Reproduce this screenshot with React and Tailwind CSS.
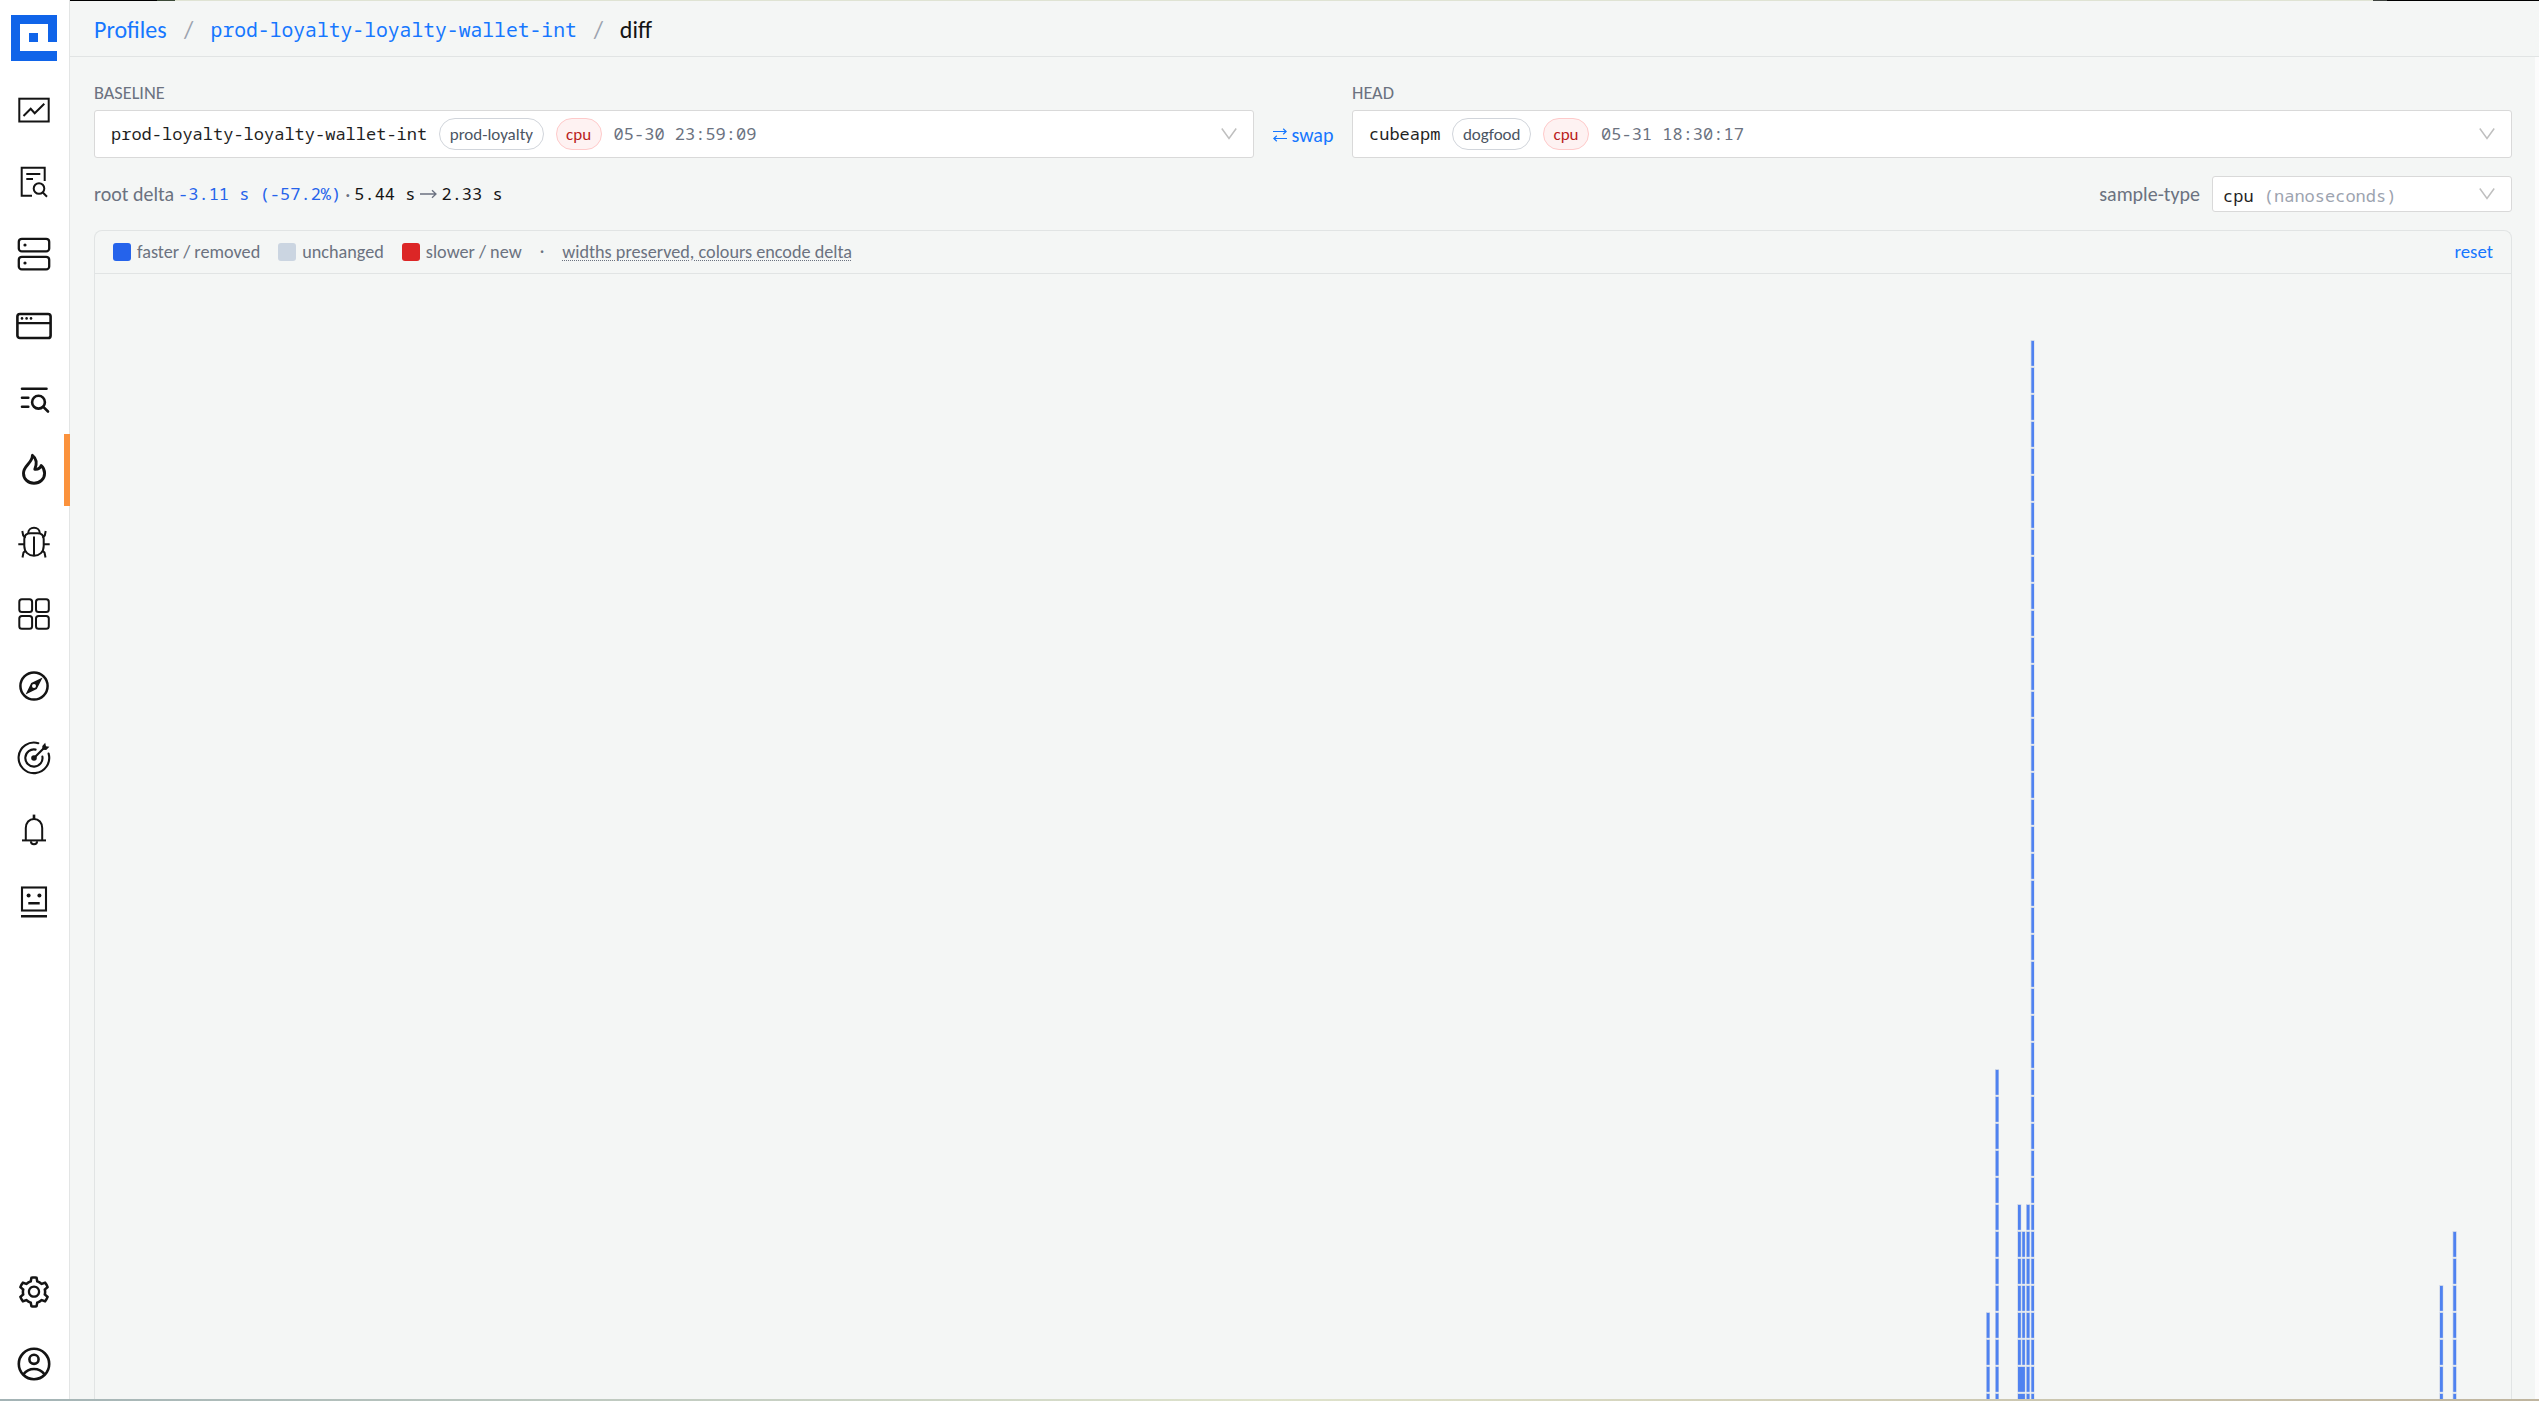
import { AiOutlineSetting } from 'react-icons/ai';

const SANS = "font-['Carlito','Calibri','Lato',sans-serif]";
const MONO = "font-['Noto_Sans_Mono','DejaVu_Sans_Mono',monospace] font-[370]";

const NAV = [
  {
    id: 'dashboards',
    art: (
      <g strokeWidth="2">
        <rect x="3.3" y="6.7" width="29.4" height="22.8" />
        <path d="M7.5 24L14.7 16.8L18.7 21.2L28.3 11.8" />
      </g>
    ),
  },
  {
    id: 'logs',
    art: (
      <g strokeWidth="2">
        <path d="M28.7 17V3.7H5.7V31.7H16M10.3 10H24.3M10.3 15H17" />
        <circle cx="23" cy="24.5" r="5.3" />
        <path d="M26.8 28.5L31 32.7" />
      </g>
    ),
  },
  {
    id: 'hosts',
    art: (
      <g strokeWidth="2.3">
        <rect x="2.8" y="2.8" width="30.4" height="12.6" rx="3" />
        <rect x="2.8" y="20.8" width="30.4" height="12.6" rx="3" />
        <circle cx="9" cy="9" r="1.6" fill="currentColor" stroke="none" />
        <circle cx="9" cy="27" r="1.6" fill="currentColor" stroke="none" />
      </g>
    ),
  },
  {
    id: 'browser',
    art: (
      <g strokeWidth="2.6">
        <rect x="1.4" y="6" width="33.2" height="24" rx="2.6" />
        <path d="M1.4 15.2H34.6" strokeWidth="2.2" />
        <g fill="currentColor" stroke="none">
          <circle cx="6" cy="10.4" r="1.3" />
          <circle cx="10.6" cy="10.4" r="1.3" />
          <circle cx="15" cy="10.4" r="1.3" />
        </g>
      </g>
    ),
  },
  {
    id: 'traces',
    art: (
      <g strokeWidth="2.6" strokeLinecap="round">
        <path d="M6 8.7H30.5M6 17.8H12.3M6 26.7H12.3" />
        <circle cx="22.5" cy="22.2" r="6.4" />
        <path d="M27.3 26.9L32 31.5" />
      </g>
    ),
  },
  {
    id: 'profiles',
    active: true,
    art: (
      <path
        strokeWidth="2.9"
        strokeLinejoin="round"
        d="M16.4 3.4C16.6 11 7.5 13.5 7.5 21.3C7.5 27 12 31.2 18 31.2C24 31.2 28.6 27 28.6 21.3C28.6 18 27.5 15.5 25.2 13.5C24.4 16 22.3 17.5 18.8 17.3C21 12 21 7 16.4 3.4Z"
      />
    ),
  },
  {
    id: 'errors',
    art: (
      <g strokeWidth="2">
        <path d="M12.3 9.4V8.8C12.3 5.8 14.7 3.7 18 3.7C21.3 3.7 23.7 5.8 23.7 8.8V9.4" />
        <path d="M14.5 9.2H21.5C25.5 9.2 27.7 11.4 27.7 15V22C27.7 28 23.5 31.7 18 31.7C12.5 31.7 8.3 28 8.3 22V15C8.3 11.4 10.5 9.2 14.5 9.2Z" />
        <path d="M18 12.5V32M2.3 20.3H8.3M27.7 20.3H33.7" />
        <path d="M6.3 7L7.2 11.5L9.5 13.8M29.7 7L28.8 11.5L26.5 13.8M6.5 33.5L7.5 28.6L9.7 26.6M29.5 33.5L28.5 28.6L26.3 26.6" />
      </g>
    ),
  },
  {
    id: 'services',
    art: (
      <g strokeWidth="2">
        <rect x="3.3" y="3.3" width="12.8" height="12.8" rx="2.6" />
        <rect x="20" y="3.3" width="12.8" height="12.8" rx="2.6" />
        <rect x="3.3" y="20" width="12.8" height="12.8" rx="2.6" />
        <rect x="20" y="20" width="12.8" height="12.8" rx="2.6" />
      </g>
    ),
  },
  {
    id: 'explore',
    art: (
      <g strokeWidth="2.5">
        <circle cx="18" cy="18" r="13.6" />
        <path
          fill="currentColor"
          stroke="none"
          fillRule="evenodd"
          d="M26.6 9.4L20.8 21L9.6 26.6L15.2 15ZM18 16A2 2 0 1 0 18 20A2 2 0 1 0 18 16Z"
        />
      </g>
    ),
  },
  {
    id: 'slo',
    art: (
      <g strokeWidth="2.1" strokeLinecap="round">
        <path d="M22.3 3.2A15.3 15.3 0 1 0 32.6 13.6" />
        <path d="M19.6 9.6A8.6 8.6 0 1 0 26.4 16.6" />
        <path d="M18 18L28 8" />
        <circle cx="18" cy="18" r="2.8" fill="currentColor" stroke="none" />
        <path d="M26.3 9.7L26.3 6L29.2 2.8L30 6.2L33.4 6.8L30.2 9.9Z" fill="currentColor" stroke="none" />
      </g>
    ),
  },
  {
    id: 'alerts',
    art: (
      <g strokeWidth="2">
        <path d="M9.8 28V16C9.8 10.8 13.2 6.9 18 6.9C22.8 6.9 26.2 10.8 26.2 16V28" />
        <path d="M6 28.4H30" />
        <path d="M18 2.6V7" strokeWidth="2.6" />
        <path d="M14.9 29.2A3.1 3.1 0 0 0 21.1 29.2" />
      </g>
    ),
  },
  {
    id: 'synthetics',
    art: (
      <g strokeWidth="2.1">
        <rect x="6" y="3.5" width="24" height="23" />
        <path d="M12.3 19.3H23.7M5 32.3H31" strokeWidth="2.4" />
        <circle cx="12.6" cy="11.6" r="2" fill="currentColor" stroke="none" />
        <circle cx="23.4" cy="11.6" r="2" fill="currentColor" stroke="none" />
      </g>
    ),
  },
];

// flame columns: x, width, top; every frame is 27px high including its gap
const FRAME = 27;
const COLUMNS = [
  { x: 1986, w: 4, top: 1312 },
  { x: 1995, w: 4, top: 1069 },
  { x: 2017.3, w: 4, top: 1204, end: 1366 },
  { x: 2021.6, w: 3.8, top: 1231, end: 1366 },
  { x: 2017.3, w: 8.1, top: 1366 },
  { x: 2026, w: 4, top: 1204 },
  { x: 2030.7, w: 3.8, top: 340 },
  { x: 2439.3, w: 4, top: 1285 },
  { x: 2452.6, w: 4, top: 1231 },
];

function NavItem({ active, children }) {
  return (
    <a className="relative flex h-[72px] w-full shrink-0 items-center pl-4 text-[#141414]">
      {children}
      {active && <span className="absolute -right-px top-0 h-full w-1.5 bg-[#fb923c]" />}
    </a>
  );
}

function Glyph({ children }) {
  return (
    <svg width="36" height="36" viewBox="0 0 36 36" fill="none" stroke="currentColor">
      {children}
    </svg>
  );
}

function Sidebar() {
  return (
    <nav className="flex w-[70px] shrink-0 flex-col border-r border-[#e3e5e5] bg-white">
      <div className="h-[74px] shrink-0 pl-[11px] pt-[15px]">
        <svg width="46" height="46" viewBox="0 0 46 46" fill="#1064e9">
          <path d="M0 0H46V27H37V9H9V36H46V46H0Z" />
          <rect x="18" y="18" width="9" height="9" />
        </svg>
      </div>
      {NAV.map((item) => (
        <NavItem key={item.id} active={item.active}>
          <Glyph>{item.art}</Glyph>
        </NavItem>
      ))}
      <div className="-mb-px mt-auto">
        <NavItem>
          <AiOutlineSetting size={36} />
        </NavItem>
        <NavItem>
          <Glyph>
            <g strokeWidth="2.6">
              <circle cx="18" cy="18" r="15.2" />
              <circle cx="18" cy="13.3" r="4.6" />
              <path d="M7.5 28.3C10 24.9 13.6 23 18 23C22.4 23 26 24.9 28.5 28.3" />
            </g>
          </Glyph>
        </NavItem>
      </div>
    </nav>
  );
}

function Chevron() {
  return (
    <svg width="16" height="12" viewBox="0 0 16 12" fill="none" stroke="#bfbfbf" strokeWidth="1.5">
      <path d="M0.8 0.5L8 10.5L15.2 0.5" />
    </svg>
  );
}

function ProfileSelect({ label, name, env, type, time }) {
  return (
    <div className="flex w-[1160px] flex-col">
      <span className="h-[25px] text-[18.3px] leading-[16px] text-[#6b7280]">{label}</span>
      <div className="flex h-12 items-center rounded-[3px] border border-[#d9d9d9] bg-white pl-4 pr-4">
        <span className={`${MONO} text-[17px] text-[#1f1f1f]`}>{name}</span>
        <span className="ml-3 flex h-8 items-center rounded-full border border-[#d1d5db] px-[9.5px] pt-px text-[17px] text-[#4b5563]">
          {env}
        </span>
        <span className="ml-3 flex h-8 items-center rounded-full border border-[#fecaca] bg-[#fef2f2] px-[9.5px] pt-px text-[17px] text-[#b91c1c]">
          {type}
        </span>
        <span className={`${MONO} ml-3 text-[17px] text-[#6b7280]`}>{time}</span>
        <span className="ml-auto">
          <Chevron />
        </span>
      </div>
    </div>
  );
}

function Swatch({ color, children }) {
  return (
    <span className="flex items-center gap-1.5">
      <span className={`size-[18px] rounded-[3px] ${color}`} />
      <span className="pt-px">{children}</span>
    </span>
  );
}

function FlameChart() {
  return (
    <svg className="block" width="2416" height="1125" viewBox="95 274 2416 1125">
      {COLUMNS.map((col, i) => {
        const end = col.end ?? 1399;
        const count = Math.ceil((end - col.top) / FRAME);
        return Array.from({ length: count }, (_, n) => (
          <g key={`${i}-${n}`}>
            <rect x={col.x} y={col.top + n * FRAME} width={col.w} height={26.5} fill="#cdd7ea" />
            <rect x={col.x + 0.7} y={col.top + n * FRAME + 1} width={col.w - 1.2} height={24.8} fill="#4f82f0" />
          </g>
        ));
      })}
    </svg>
  );
}

export default function App() {
  return (
    <div className={`${SANS} flex h-[1401px] w-[2539px] flex-col overflow-hidden bg-[#f4f6f5]`}>
      <div className="flex h-px shrink-0 bg-[#dfe3d3]">
        <span className="w-[157px] bg-black" />
        <span className="w-[18px] bg-[#3c4a38]" />
        <span className="ml-auto w-[14px] bg-[#3f443f]" />
        <span className="w-[152px] bg-black" />
      </div>
      <div className="flex min-h-0 flex-1">
        <div className="-mt-px flex">
          <Sidebar />
        </div>
        <main className="flex min-w-0 flex-1 flex-col">
          <header className="flex h-14 shrink-0 items-center border-b border-[#e1e4e4] pl-6 pt-0.5 text-[24px] text-[#1677ff]">
            <span>Profiles</span>
            <span className="w-[44px] text-center text-[#9ca3af]">/</span>
            <span className={`${MONO} text-[19.7px]`}>prod-loyalty-loyalty-wallet-int</span>
            <span className="w-[43px] text-center text-[#9ca3af]">/</span>
            <span className="text-[#141414]">diff</span>
          </header>
          <div className="flex min-h-0 flex-1">
            <section className="flex flex-1 flex-col pl-6 pr-[23px] pt-7">
              <div className="flex">
                <ProfileSelect
                  label="BASELINE"
                  name="prod-loyalty-loyalty-wallet-int"
                  env="prod-loyalty"
                  type="cpu"
                  time="05-30 23:59:09"
                />
                <button className="mt-[25px] flex h-12 w-[98px] items-center justify-center gap-[5px] pt-px text-[20px] text-[#1677ff]">
                  <svg width="14" height="14" viewBox="0 0 14 14" fill="none" stroke="currentColor" strokeWidth="1.2">
                    <path d="M0 3.5H13.2M10.2 0.7L13.2 3.5L10.2 6.3M14 10.5H0.8M3.8 7.7L0.8 10.5L3.8 13.3" />
                  </svg>
                  swap
                </button>
                <ProfileSelect label="HEAD" name="cubeapm" env="dogfood" type="cpu" time="05-31 18:30:17" />
              </div>

              <div className="mt-[18px] flex h-9 items-center text-[20px] text-[#6b7280]">
                <span>root delta</span>
                <span className={`${MONO} ml-1 text-[17px] text-[#2563eb]`}>-3.11 s (-57.2%)</span>
                <span className="w-[13px] text-center">·</span>
                <span className={`${MONO} text-[17px] text-[#141414]`}>5.44 s</span>
                <svg className="mx-[4.5px]" width="17" height="10" viewBox="0 0 17 10" fill="none" stroke="currentColor" strokeWidth="1.3">
                  <path d="M0 5H16M12 1.2L16 5L12 8.8" />
                </svg>
                <span className={`${MONO} text-[17px] text-[#141414]`}>2.33 s</span>
                <span className="ml-auto mr-3">sample-type</span>
                <span className={`${MONO} flex h-9 w-[300px] items-center justify-between rounded-[3px] border border-[#d9d9d9] bg-white pl-2.5 pr-4 text-[17px]`}>
                  <span className="pt-[3px] text-[#1f1f1f]">
                    cpu <span className="text-[#9ca3af]">(nanoseconds)</span>
                  </span>
                  <Chevron />
                </span>
              </div>

              <div className="mt-[18px] flex min-h-0 flex-1 flex-col rounded-t-lg border border-b-0 border-[#e1e4e4]">
                <div className="flex h-[43px] shrink-0 items-center gap-[18px] border-b border-[#e1e4e4] pl-[18px] pr-[18px] text-[18.2px] text-[#6b7280]">
                  <Swatch color="bg-[#2563eb]">faster / removed</Swatch>
                  <Swatch color="bg-[#cbd5e1]">unchanged</Swatch>
                  <Swatch color="bg-[#dc2626]">slower / new</Swatch>
                  <span>·</span>
                  <span className="pt-px underline decoration-dotted decoration-1 underline-offset-2">
                    widths preserved, colours encode delta
                  </span>
                  <button className="ml-auto text-[18.8px] text-[#1677ff]">reset</button>
                </div>
                <FlameChart />
              </div>
            </section>
            <div className="w-1 shrink-0 bg-[#fcfcfc]" />
          </div>
        </main>
      </div>
      <div className="h-0.5 shrink-0 bg-linear-to-r from-[#a3b3b5] via-[#dfe3cc] to-[#bfb59f]" />
    </div>
  );
}
